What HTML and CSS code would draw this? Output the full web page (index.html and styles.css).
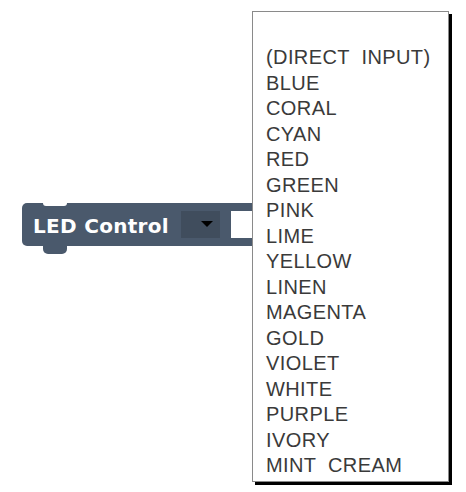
FILE: index.html
```html
<!DOCTYPE html>
<html>
<head>
<meta charset="utf-8">
<link rel="stylesheet" href="styles.css">
</head>
<body>
<div class="workspace">
  <div class="block">
    <span class="label">LED Control</span>
    <span class="drop"><svg width="12" height="7" viewBox="0 0 12 7"><path d="M0 0 H12 L6 6 Z" fill="#000"/></svg></span>
    <span class="field"></span>
  </div>
  <ul class="menu">
    <li>(DIRECT  INPUT)</li>
    <li>BLUE</li>
    <li>CORAL</li>
    <li>CYAN</li>
    <li>RED</li>
    <li>GREEN</li>
    <li>PINK</li>
    <li>LIME</li>
    <li>YELLOW</li>
    <li>LINEN</li>
    <li>MAGENTA</li>
    <li>GOLD</li>
    <li>VIOLET</li>
    <li>WHITE</li>
    <li>PURPLE</li>
    <li>IVORY</li>
    <li>MINT  CREAM</li>
  </ul>
</div>
</body>
</html>
```

FILE: styles.css
```css
html, body {
  margin: 0;
  padding: 0;
  background: #fff;
}
.workspace {
  position: relative;
  width: 466px;
  height: 492px;
  padding: 203px 0 0 22px;
  box-sizing: border-box;
}
.block {
  position: relative;
  width: 240px;
  height: 43px;
  background: #4a596c;
  border-radius: 5px;
  display: flex;
  align-items: center;
  box-sizing: border-box;
  padding-left: 11px;
}
.block::before {
  content: "";
  position: absolute;
  left: 21px;
  top: 0;
  width: 24px;
  height: 3px;
  background: #fff;
  border-radius: 0 0 4px 4px;
}
.block::after {
  content: "";
  position: absolute;
  left: 21px;
  top: 43px;
  width: 24px;
  height: 8px;
  background: #4a596c;
  border-radius: 0 0 5px 5px;
}
.label {
  font-family: "DejaVu Sans", sans-serif;
  font-weight: bold;
  font-size: 20px;
  letter-spacing: 0.3px;
  color: #fff;
  width: 148px;
  flex: none;
  white-space: nowrap;
  position: relative;
  top: 1px;
}
.drop {
  width: 39px;
  height: 27px;
  background: #404d5d;
  display: flex;
  align-items: center;
  justify-content: flex-end;
  padding-right: 7px;
  box-sizing: border-box;
  flex: none;
}
.field {
  margin-left: 11px;
  width: 40px;
  height: 27px;
  background: #fff;
  flex: none;
}
.menu {
  position: absolute;
  left: 252px;
  top: 11px;
  width: 197px;
  height: 471px;
  box-sizing: border-box;
  margin: 0;
  padding: 33px 0 0 13px;
  list-style: none;
  background: #fff;
  border: 1px solid #8a8a8a;
  box-shadow: 3px 3px 0 #000;
}
.menu li {
  font-family: "Liberation Sans", Arial, sans-serif;
  font-size: 20px;
  letter-spacing: 0.4px;
  line-height: 25.5px;
  color: #3a3a3a;
  white-space: pre;
}
```
